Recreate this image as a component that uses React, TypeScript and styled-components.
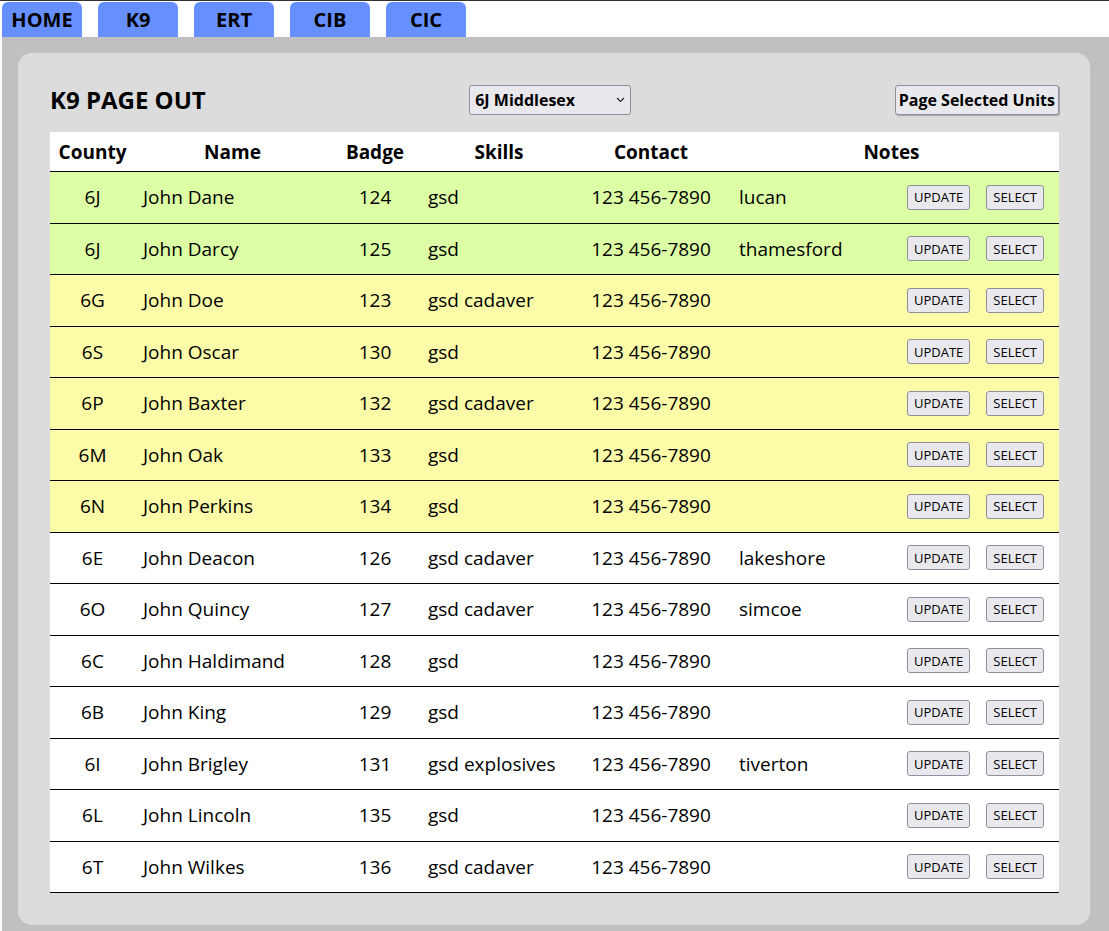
import React from 'react'
import styled, { createGlobalStyle } from 'styled-components'

const GlobalStyle = createGlobalStyle`
  html, body {
    margin: 0;
    padding: 0;
    background: #ffffff;
  }
  body {
    border-top: 1px solid #333333;
    font-family: "Open Sans", "Noto Sans", sans-serif;
    color: #000;
  }
`

const Page = styled.div`
  padding: 1px 0 0 2px;
  display: flex;
  flex-direction: column;
  min-height: 930px;
  box-sizing: border-box;
`

const TabBar = styled.nav`
  display: flex;
  gap: 16px;
  height: 35px;
`

const Tab = styled.a`
  width: 80px;
  height: 35px;
  display: flex;
  align-items: center;
  justify-content: center;
  background: #668fff;
  border-radius: 6px 6px 0 0;
  font-weight: 700;
  font-size: 20px;
  color: #000;
  text-decoration: none;
  cursor: pointer;
`

const Backdrop = styled.main`
  flex: 1;
  background: #c0c0c0;
  padding: 16px 19px 16px 16px;
`

const Panel = styled.section`
  background: #dcdcdc;
  border-radius: 14px;
  padding: 32px 31px 32px 32px;
`

const Toolbar = styled.div`
  display: flex;
  align-items: center;
  justify-content: space-between;
  height: 30px;
  margin-bottom: 17px;
`

const Title = styled.h1`
  margin: 0;
  font-size: 24px;
  font-weight: 700;
  line-height: 30px;
`

const SelectWrap = styled.div`
  position: relative;
  width: 162px;
  height: 30px;
`

const Select = styled.select`
  appearance: none;
  width: 100%;
  height: 100%;
  box-sizing: border-box;
  background: #e9e9ed;
  border: 1px solid #8f8f9d;
  border-radius: 3px;
  padding: 0 24px 0 5px;
  font-family: "Open Sans", "Noto Sans", sans-serif;
  font-weight: 700;
  font-size: 16px;
  color: #000;
`

const Chevron = styled.svg`
  position: absolute;
  right: 6px;
  top: 12px;
  pointer-events: none;
`

const ActionButton = styled.button`
  height: 30px;
  padding: 0 3px;
  background: #e9e9ed;
  border: 1px solid #8f8f9d;
  border-radius: 3px;
  font-family: "Open Sans", "Noto Sans", sans-serif;
  font-weight: 700;
  font-size: 16px;
  color: #000;
  box-shadow: 1px 1px 1px rgba(0, 0, 0, 0.25);
`

const Table = styled.table`
  width: 100%;
  table-layout: fixed;
  border-collapse: separate;
  border-spacing: 0;
  background: #ffffff;
`

const HeadCell = styled.th`
  height: 39px;
  padding: 0;
  font-size: 19px;
  font-weight: 700;
  text-align: center;
  border-bottom: 1.5px solid #000;
`

type Tone = 'green' | 'yellow' | 'white'

const tones: Record<Tone, string> = {
  green: '#dcffa6',
  yellow: '#fcfca8',
  white: '#ffffff',
}

const Row = styled.tr<{ $tone: Tone }>`
  background: ${p => tones[p.$tone]};
`

const Cell = styled.td<{ $align?: 'left' | 'center'; $padLeft?: number }>`
  height: 50.5px;
  padding: 0 8px 0 ${p => p.$padLeft ?? 8}px;
  font-size: 19px;
  text-align: ${p => p.$align || 'left'};
  border-bottom: 1px solid #000;
  white-space: nowrap;
`

const NotesBox = styled.div`
  display: flex;
  align-items: center;
`

const NoteText = styled.span`
  flex: 1;
`

const RowButtons = styled.div`
  display: flex;
  gap: 16px;
  padding-right: 7px;
`

const SmallButton = styled.button`
  height: 25px;
  padding: 0 6px;
  background: #e9e9ed;
  border: 1px solid #8f8f9d;
  border-radius: 3px;
  font-family: "Open Sans", "Noto Sans", sans-serif;
  font-size: 13px;
  color: #000;
`

interface IUnit {
  county: string
  name: string
  badge: number
  skills: string
  contact: string
  notes: string
  tone: Tone
}

const units: IUnit[] = [
  { county: '6J', name: 'John Dane', badge: 124, skills: 'gsd', contact: '123 456-7890', notes: 'lucan', tone: 'green' },
  { county: '6J', name: 'John Darcy', badge: 125, skills: 'gsd', contact: '123 456-7890', notes: 'thamesford', tone: 'green' },
  { county: '6G', name: 'John Doe', badge: 123, skills: 'gsd cadaver', contact: '123 456-7890', notes: '', tone: 'yellow' },
  { county: '6S', name: 'John Oscar', badge: 130, skills: 'gsd', contact: '123 456-7890', notes: '', tone: 'yellow' },
  { county: '6P', name: 'John Baxter', badge: 132, skills: 'gsd cadaver', contact: '123 456-7890', notes: '', tone: 'yellow' },
  { county: '6M', name: 'John Oak', badge: 133, skills: 'gsd', contact: '123 456-7890', notes: '', tone: 'yellow' },
  { county: '6N', name: 'John Perkins', badge: 134, skills: 'gsd', contact: '123 456-7890', notes: '', tone: 'yellow' },
  { county: '6E', name: 'John Deacon', badge: 126, skills: 'gsd cadaver', contact: '123 456-7890', notes: 'lakeshore', tone: 'white' },
  { county: '6O', name: 'John Quincy', badge: 127, skills: 'gsd cadaver', contact: '123 456-7890', notes: 'simcoe', tone: 'white' },
  { county: '6C', name: 'John Haldimand', badge: 128, skills: 'gsd', contact: '123 456-7890', notes: '', tone: 'white' },
  { county: '6B', name: 'John King', badge: 129, skills: 'gsd', contact: '123 456-7890', notes: '', tone: 'white' },
  { county: '6I', name: 'John Brigley', badge: 131, skills: 'gsd explosives', contact: '123 456-7890', notes: 'tiverton', tone: 'white' },
  { county: '6L', name: 'John Lincoln', badge: 135, skills: 'gsd', contact: '123 456-7890', notes: '', tone: 'white' },
  { county: '6T', name: 'John Wilkes', badge: 136, skills: 'gsd cadaver', contact: '123 456-7890', notes: '', tone: 'white' },
]

const tabs = ['HOME', 'K9', 'ERT', 'CIB', 'CIC']

const App: React.FC = () => {
  return (
    <Page>
      <GlobalStyle />
      <TabBar>
        {tabs.map(t => (
          <Tab key={t}>{t}</Tab>
        ))}
      </TabBar>
      <Backdrop>
        <Panel>
          <Toolbar>
            <Title>K9 PAGE OUT</Title>
            <SelectWrap>
              <Select defaultValue="6J">
                <option value="6J">6J Middlesex</option>
              </Select>
              <Chevron width="9" height="6" viewBox="0 0 9 6">
                <path d="M1 1 L4.5 4.5 L8 1" fill="none" stroke="#222" strokeWidth="1.2" />
              </Chevron>
            </SelectWrap>
            <ActionButton>Page Selected Units</ActionButton>
          </Toolbar>
          <Table>
            <colgroup>
              <col style={{ width: 85 }} />
              <col style={{ width: 195 }} />
              <col style={{ width: 90 }} />
              <col style={{ width: 158 }} />
              <col style={{ width: 146 }} />
              <col />
            </colgroup>
            <thead>
              <tr>
                <HeadCell>County</HeadCell>
                <HeadCell>Name</HeadCell>
                <HeadCell>Badge</HeadCell>
                <HeadCell>Skills</HeadCell>
                <HeadCell>Contact</HeadCell>
                <HeadCell>Notes</HeadCell>
              </tr>
            </thead>
            <tbody>
              {units.map(u => (
                <Row key={u.badge} $tone={u.tone}>
                  <Cell $align="center">{u.county}</Cell>
                  <Cell>{u.name}</Cell>
                  <Cell $align="center">{u.badge}</Cell>
                  <Cell>{u.skills}</Cell>
                  <Cell $align="center">{u.contact}</Cell>
                  <Cell $padLeft={15}>
                    <NotesBox>
                      <NoteText>{u.notes}</NoteText>
                      <RowButtons>
                        <SmallButton>UPDATE</SmallButton>
                        <SmallButton>SELECT</SmallButton>
                      </RowButtons>
                    </NotesBox>
                  </Cell>
                </Row>
              ))}
            </tbody>
          </Table>
        </Panel>
      </Backdrop>
    </Page>
  )
}

export default App
